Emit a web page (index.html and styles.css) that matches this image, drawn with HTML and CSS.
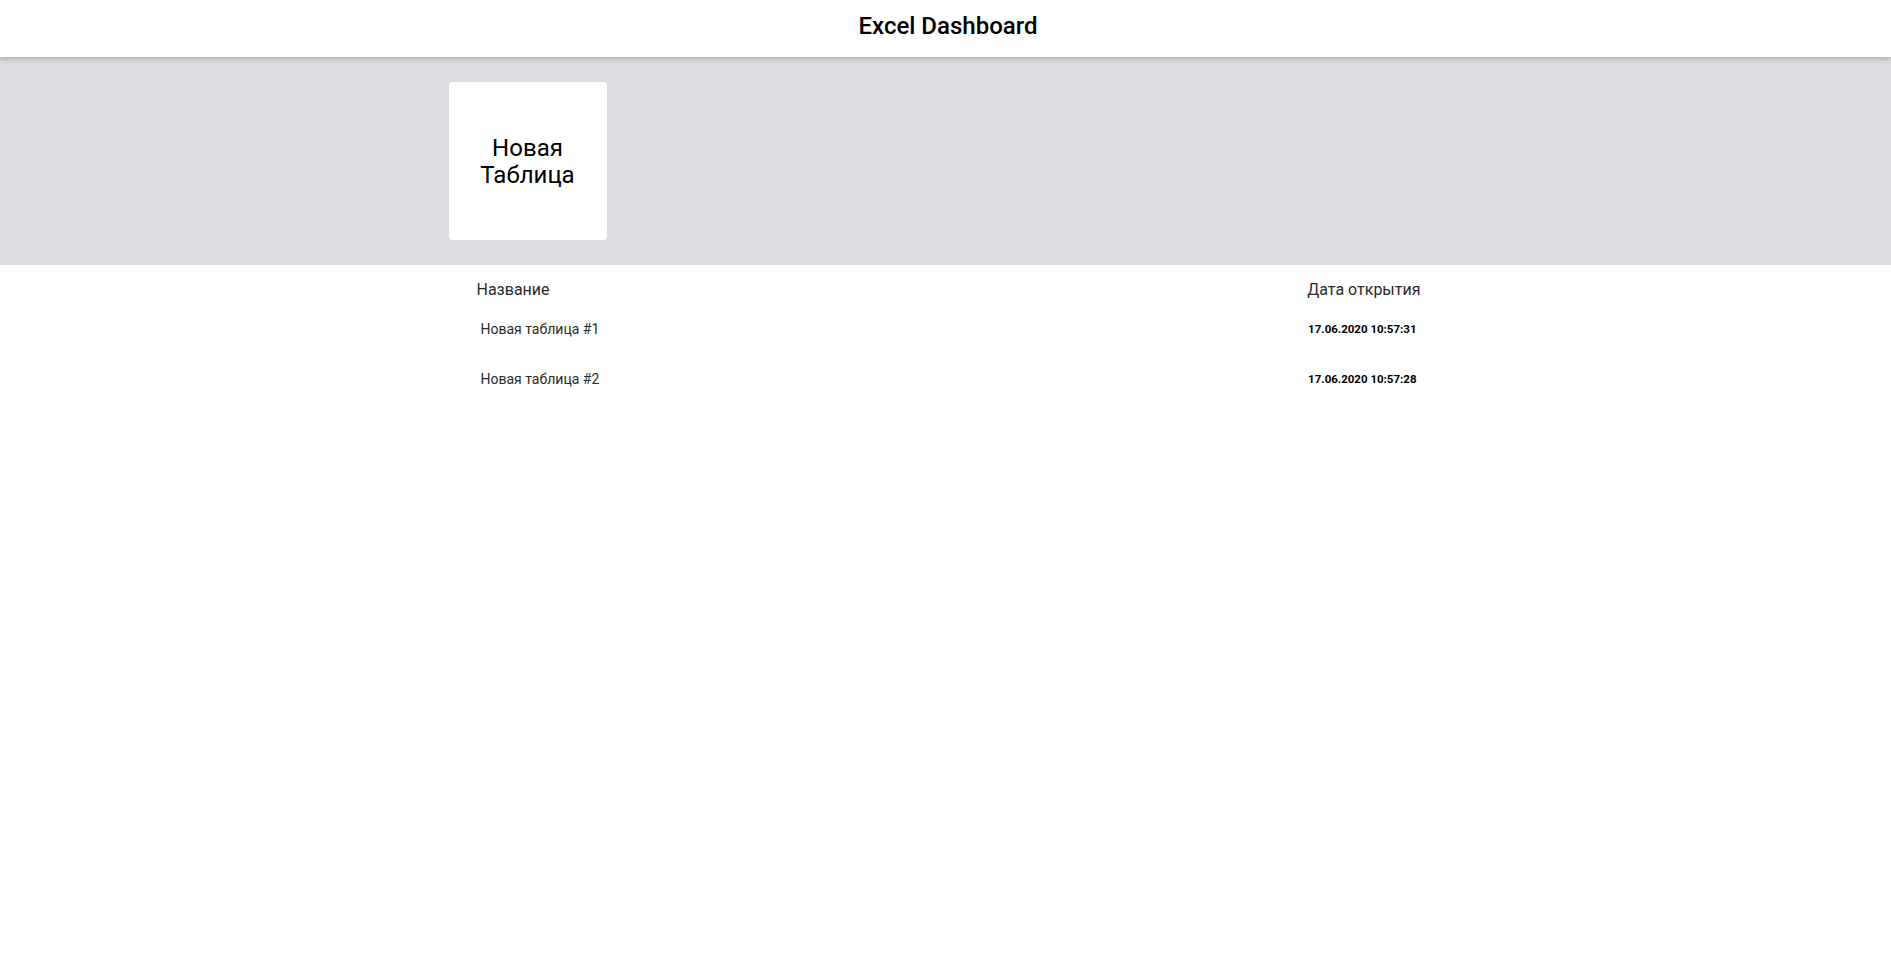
FILE: index.html
```html
<!DOCTYPE html>
<html lang="ru">
<head>
<meta charset="utf-8">
<title>Excel Dashboard</title>
<link rel="stylesheet" href="styles.css">
</head>
<body>
<div class="db">
  <header class="db__header">
    <h1>Excel Dashboard</h1>
  </header>
  <section class="db__new">
    <div class="db__view">
      <a class="db__create" href="#">Новая<br>Таблица</a>
    </div>
  </section>
  <section class="db__table db__view">
    <div class="db__list-header">
      <span>Название</span>
      <span>Дата открытия</span>
    </div>
    <ul class="db__list">
      <li class="db__record">
        <a href="#">Новая таблица #1</a>
        <strong>17.06.2020 10:57:31</strong>
      </li>
      <li class="db__record">
        <a href="#">Новая таблица #2</a>
        <strong>17.06.2020 10:57:28</strong>
      </li>
    </ul>
  </section>
</div>
</body>
</html>
```

FILE: styles.css
```css
* {
  box-sizing: border-box;
}

html, body {
  margin: 0;
  padding: 0;
  background: #fff;
  font-family: Roboto, "Noto Sans", Arial, sans-serif;
  color: #202124;
}

.db__header {
  height: 57px;
  display: flex;
  align-items: center;
  justify-content: center;
  padding: 0 0 5px 5px;
  background: #fff;
  box-shadow: 0 2px 5px rgba(0, 0, 0, 0.22);
  position: relative;
  z-index: 2;
}

.db__header h1 {
  margin: 0;
  font-size: 24px;
  font-weight: 500;
  color: #000;
}

.db__new {
  background: #dadce0;
  padding: 25px 0;
}

.db__view {
  width: 994px;
  margin: 0 auto;
}

.db__create {
  width: 158px;
  height: 158px;
  padding-top: 2px;
  background: #fff;
  border-radius: 3px;
  display: flex;
  align-items: center;
  justify-content: center;
  text-align: center;
  font-size: 24px;
  line-height: 27px;
  color: #000;
  text-decoration: none;
}

.db__table {
  padding: 15px 0 16px;
}

.db__list-header {
  display: flex;
  justify-content: space-between;
  padding: 0 22px 0 28px;
  font-size: 16px;
  color: #2a2a2a;
  margin-bottom: 5px;
}

.db__list {
  list-style: none;
  margin: 0;
  padding: 0;
}

.db__record {
  display: flex;
  justify-content: space-between;
  align-items: center;
  padding: 17px 26px 17px 32px;
}

.db__record a {
  font-size: 14px;
  color: #2a2a2a;
  text-decoration: none;
}

.db__record strong {
  font-size: 11.5px;
  font-weight: 700;
  color: #000;
}
```
